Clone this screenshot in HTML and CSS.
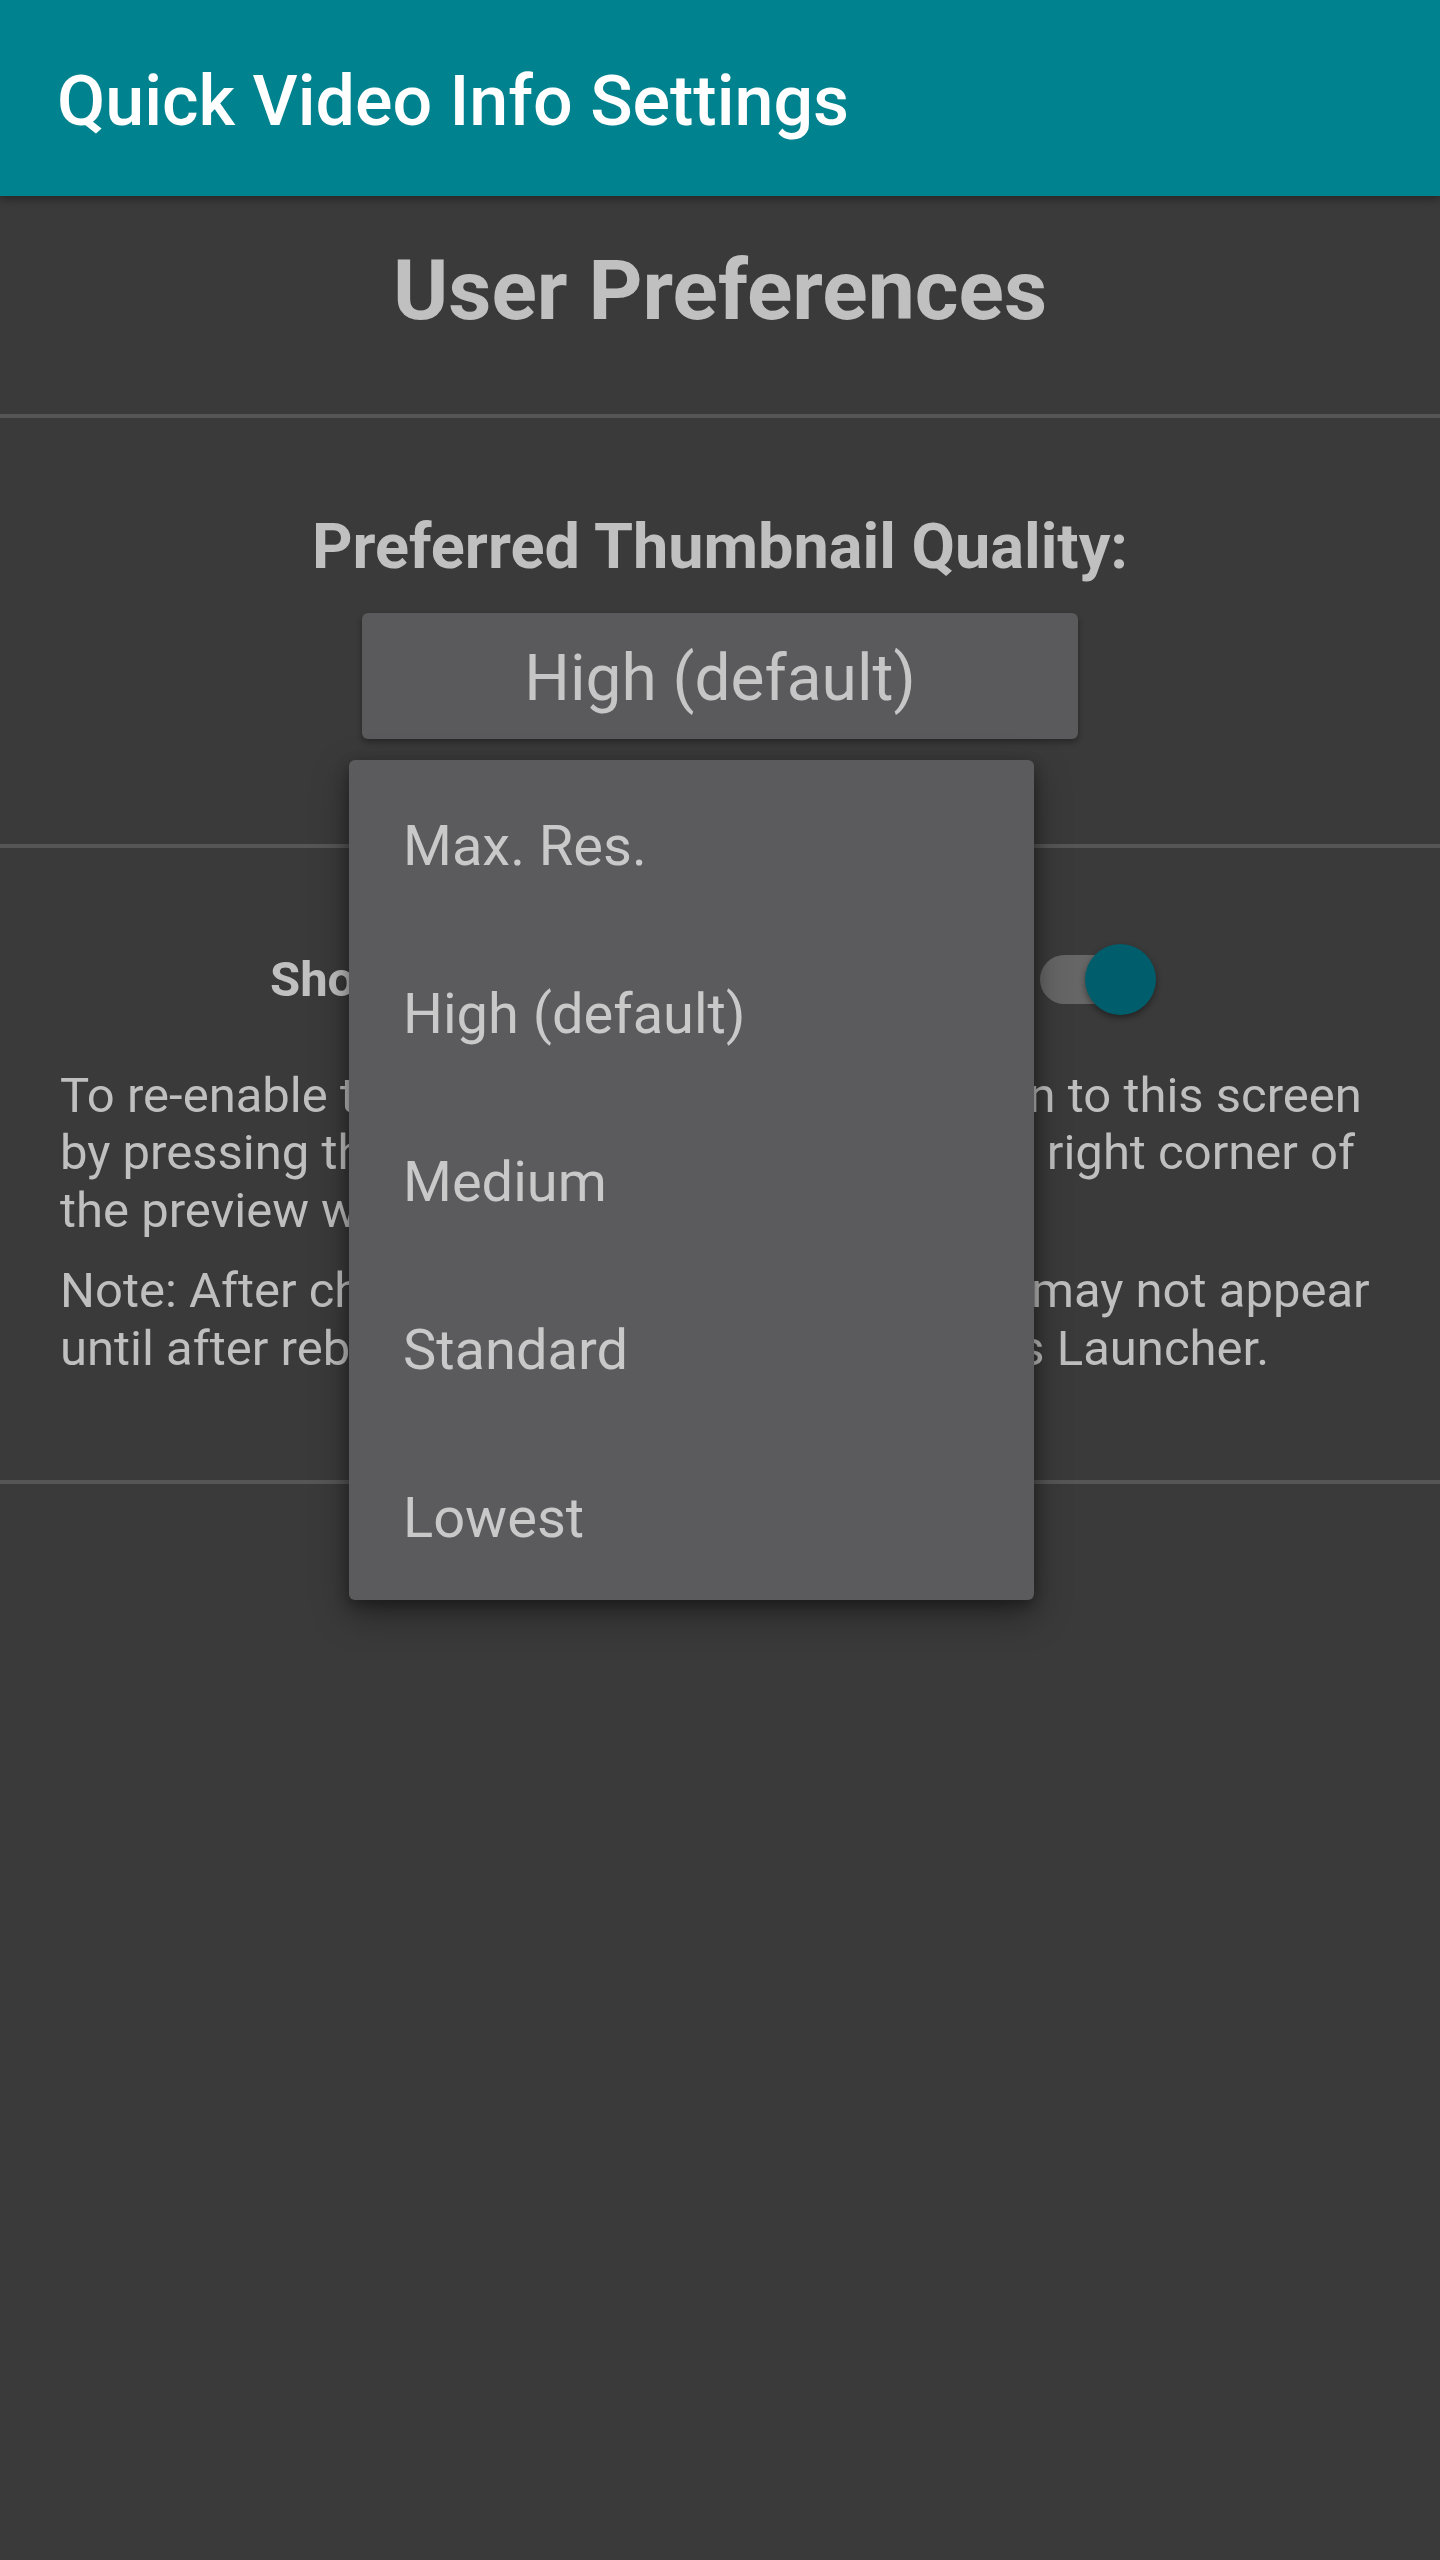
FILE: index.html
```html
<!DOCTYPE html>
<html lang="en">
<head>
<meta charset="utf-8">
<title>Quick Video Info Settings</title>
<link rel="stylesheet" href="styles.css">
</head>
<body>
<header class="appbar">
  <h1 class="appbar-title">Quick Video Info Settings</h1>
</header>
<main class="content">
  <section class="section section-heading">
    <h2 class="page-title">User Preferences</h2>
  </section>
  <hr class="divider">
  <section class="section section-quality">
    <h3 class="field-label">Preferred Thumbnail Quality:</h3>
    <div class="spinner-wrap">
      <button class="spinner" type="button">High (default)</button>
      <ul class="menu">
        <li class="menu-item">Max. Res.</li>
        <li class="menu-item">High (default)</li>
        <li class="menu-item">Medium</li>
        <li class="menu-item">Standard</li>
        <li class="menu-item">Lowest</li>
      </ul>
    </div>
  </section>
  <hr class="divider">
  <section class="section section-preview">
    <div class="switch-row">
      <span class="switch-label">Show Video Info Preview:</span>
      <span class="switch" role="switch" aria-checked="true">
        <span class="switch-track"></span>
        <span class="switch-thumb"></span>
      </span>
    </div>
    <p class="body-text">To re-enable the preview window, kindly return to this screen by pressing the top settings icon in the upper right corner of the preview window.</p>
    <p class="body-text note">Note: After changing this setting, the effects may not appear until after rebooting or restarting this device's Launcher.</p>
  </section>
  <hr class="divider">
</main>
</body>
</html>
```
FILE: styles.css
```css
* {
  box-sizing: border-box;
}

html, body {
  margin: 0;
  padding: 0;
}

body {
  background: #3a3a3a;
  min-height: 2560px;
  font-family: Roboto, "Noto Sans", "Liberation Sans", sans-serif;
  color: #c0c0c0;
}

.appbar {
  position: relative;
  z-index: 2;
  height: 196px;
  background: #00838f;
  display: flex;
  align-items: center;
  padding: 6px 0 0 57px;
  box-shadow: 0 3px 8px rgba(0, 0, 0, 0.35);
}

.appbar-title {
  margin: 0;
  font-size: 70px;
  font-weight: 500;
  line-height: 82px;
  color: #ffffff;
}

.content {
  display: flex;
  flex-direction: column;
}

.section {
  display: flex;
  flex-direction: column;
  align-items: center;
}

.section-heading {
  padding: 46px 0 74px;
}

.page-title {
  margin: 0;
  font-size: 84px;
  font-weight: 700;
  line-height: 98px;
  color: #c0c0c0;
}

.divider {
  margin: 0;
  border: 0;
  height: 4px;
  background: #565656;
}

.section-quality {
  padding: 92px 0 105px;
}

.field-label {
  margin: 0 0 29px;
  font-size: 63px;
  font-weight: 700;
  line-height: 74px;
  color: #c0c0c0;
}

.spinner-wrap {
  position: relative;
  width: 716px;
}

.spinner {
  display: block;
  width: 100%;
  height: 126px;
  padding: 5px 0 0;
  border: 0;
  border-radius: 6px;
  background: #5a5a5c;
  box-shadow: 0 3px 6px rgba(0, 0, 0, 0.35);
  font-family: Roboto, "Noto Sans", "Liberation Sans", sans-serif;
  font-size: 64px;
  font-weight: 400;
  line-height: 121px;
  color: #c6c6c6;
  text-align: center;
}

.menu {
  position: absolute;
  z-index: 5;
  top: calc(100% + 21px);
  left: -13px;
  width: 685px;
  margin: 0;
  padding: 0;
  list-style: none;
  background: #5b5b5d;
  border-radius: 6px;
  box-shadow: 0 14px 36px rgba(0, 0, 0, 0.38), 0 5px 14px rgba(0, 0, 0, 0.3);
}

.menu-item {
  height: 168px;
  padding: 4px 0 0 54px;
  display: flex;
  align-items: center;
  font-size: 56px;
  line-height: 66px;
  color: #c9c9c9;
}

.section-preview {
  padding: 96px 0 103px;
  align-items: stretch;
}

.switch-row {
  display: flex;
  align-items: center;
  justify-content: space-between;
  width: 886px;
  margin-left: 270px;
}

.switch-label {
  font-size: 49px;
  font-weight: 700;
  line-height: 57px;
  color: #c0c0c0;
}

.switch {
  position: relative;
  width: 116px;
  height: 71px;
  display: flex;
  align-items: center;
}

.switch-track {
  width: 110px;
  height: 49px;
  border-radius: 25px;
  background: #666666;
}

.switch-thumb {
  position: absolute;
  right: 0;
  top: 0;
  width: 71px;
  height: 71px;
  border-radius: 50%;
  background: #005e6c;
  box-shadow: 0 3px 6px rgba(0, 0, 0, 0.4);
}

.body-text {
  margin: 52px 60px 0;
  font-size: 49px;
  line-height: 57.4px;
  color: #bfbfbf;
}

.note {
  margin-top: 23px;
}
```
